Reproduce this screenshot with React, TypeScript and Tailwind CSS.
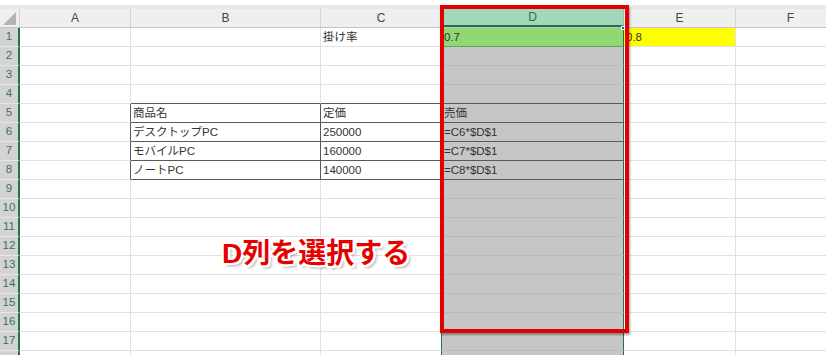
import React from 'react';

const cols = [
  { key: 'A', w: 'w-[111px]' },
  { key: 'B', w: 'w-[190px]' },
  { key: 'C', w: 'w-[121px]' },
  { key: 'D', w: 'w-[182px]' },
  { key: 'E', w: 'w-[112px]' },
  { key: 'F', w: 'w-[110px]' },
];

const values: Record<string, string> = {
  C1: '掛け率',
  D1: '0.7',
  E1: '0.8',
  B5: '商品名',
  C5: '定価',
  D5: '売価',
  B6: 'デスクトップPC',
  C6: '250000',
  D6: '=C6*$D$1',
  B7: 'モバイルPC',
  C7: '160000',
  D7: '=C7*$D$1',
  B8: 'ノートPC',
  C8: '140000',
  D8: '=C8*$D$1',
};

const font = 'font-[Liberation_Sans,Noto_Sans_CJK_JP,sans-serif]';

function inTable(r: number, c: string) {
  return r >= 5 && r <= 8 && (c === 'B' || c === 'C' || c === 'D');
}

function Cell({ r, c, w }: { r: number; c: string; w: string }) {
  const id = c + r;
  let bg = 'bg-white';
  if (c === 'D') bg = 'bg-[#c6c6c6]';
  if (id === 'D1') bg = 'bg-[#90d874]';
  if (id === 'E1') bg = 'bg-[#ffff00]';

  let right = c === 'D' ? 'border-r-[#b9b9b9]' : 'border-r-[#e1e1e1]';
  let bottom = c === 'D' ? 'border-b-[#b9b9b9]' : 'border-b-[#e1e1e1]';

  if (inTable(r, c) || (r === 4 && (c === 'B' || c === 'C' || c === 'D'))) bottom = 'border-b-[#595959]';
  if (inTable(r, c) && c !== 'D') right = 'border-r-[#595959]';
  if (c === 'A' && r >= 5 && r <= 8) right = 'border-r-[#595959]';
  if (c === 'C' || c === 'D') right = 'border-r-[#217346]';
  if (id === 'D1') bottom = 'border-b-[#5aa55e]';

  return (
    <div
      className={`${w} h-full shrink-0 border-r border-b ${right} ${bottom} ${bg} flex items-center pl-[2px] pt-[1px] overflow-visible whitespace-nowrap text-[11.5px] text-[#333] ${font}`}
    >
      {values[id] ?? ''}
    </div>
  );
}

export default function App() {
  const rows = Array.from({ length: 17 }, (_, i) => i + 1);

  return (
    <div className="relative w-[826px] h-[360px] overflow-hidden bg-white">
      <div className="h-[5px] bg-white" />
      <div className="h-[4px] bg-[#e8e8e8]" />

      {/* column headers */}
      <div className="flex h-[19px] bg-[#efefef] border-b border-[#c4c4c4]">
        <div className="w-[20px] shrink-0 h-full border-r border-[#d4d4d4] relative">
          <div className="absolute right-[3px] bottom-[2px] w-0 h-0 border-l-[13px] border-l-transparent border-b-[13px] border-b-[#b4b4b4]" />
        </div>
        {cols.map((col) => (
          <div
            key={col.key}
            className={`${col.w} shrink-0 h-full flex items-center justify-center border-r text-[12px] ${font} ${
              col.key === 'D'
                ? 'bg-[#a2d7b9] text-[#217346] border-[#8cc4a4] border-b-2 border-b-[#217346]'
                : 'text-[#444] border-[#d4d4d4]'
            }`}
          >
            {col.key}
          </div>
        ))}
      </div>

      {rows.map((r) => (
        <div key={r} className="flex h-[19px]">
          <div
            className={`w-[20px] shrink-0 h-full bg-[#d3d3d3] border-r-2 border-r-[#217346] border-b border-b-[#e6e6e6] flex items-center justify-center text-[11.5px] text-[#3e7256] ${font}`}
          >
            {r}
          </div>
          {cols.map((col) => (
            <Cell key={col.key} r={r} c={col.key} w={col.w} />
          ))}
        </div>
      ))}

      {/* partially visible row 18 */}
      <div className="flex h-[4px]">
        <div className="w-[20px] shrink-0 h-full bg-[#d3d3d3] border-r-2 border-r-[#217346]" />
        <div className="w-[111px] shrink-0 border-r border-[#e1e1e1]" />
        <div className="w-[190px] shrink-0 border-r border-[#e1e1e1]" />
        <div className="w-[121px] shrink-0 border-r border-[#217346]" />
        <div className="w-[182px] shrink-0 bg-[#c6c6c6] border-r border-[#217346]" />
        <div className="w-[112px] shrink-0 border-r border-[#e1e1e1]" />
      </div>

      {/* fill handle of active cell */}
      <div className="absolute left-[621px] top-[26px] w-[4px] h-[4px] bg-[#217346] border border-white" />

      {/* red highlight box */}
      <div className="absolute left-[440px] top-[5px] w-[189px] h-[328px] border-4 border-[#e00000] shadow-[1px_2px_2px_rgba(0,0,0,0.35)]" />

      {/* annotation */}
      <div
        className={`absolute left-[222px] top-[240px] text-[28px] leading-none font-bold text-[#e60000] ${font} [text-shadow:-2px_0_0_#fff,2px_0_0_#fff,0_-2px_0_#fff,0_2px_0_#fff,-2px_-2px_0_#fff,2px_2px_0_#fff,-2px_2px_0_#fff,2px_-2px_0_#fff,3px_3px_3px_rgba(0,0,0,0.35)]`}
      >
        D列を選択する
      </div>
    </div>
  );
}
